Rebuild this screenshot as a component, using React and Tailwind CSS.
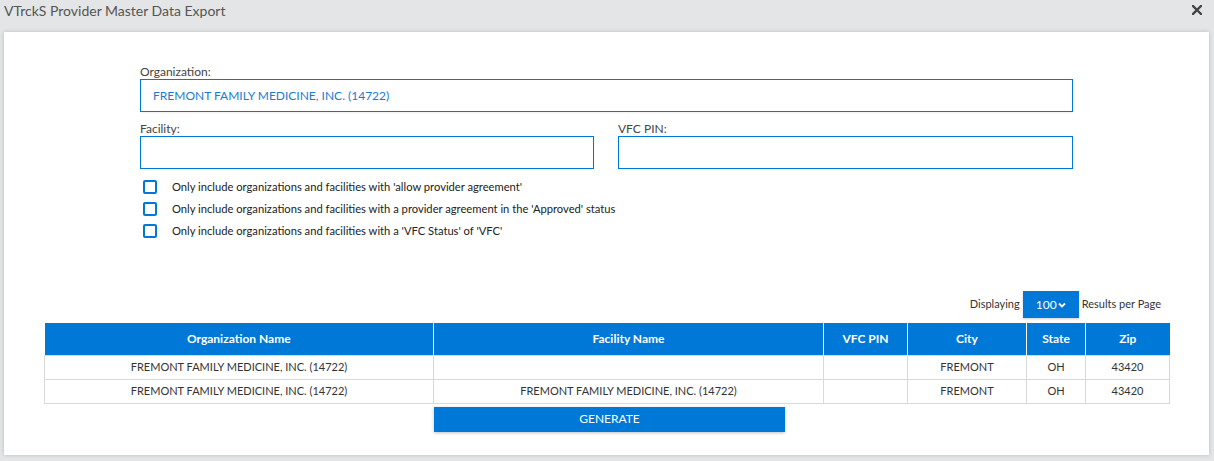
import React from 'react';

const columns = [
  { key: 'org', label: 'Organization Name', width: 389 },
  { key: 'facility', label: 'Facility Name', width: 390 },
  { key: 'pin', label: 'VFC PIN', width: 84 },
  { key: 'city', label: 'City', width: 119 },
  { key: 'state', label: 'State', width: 59 },
  { key: 'zip', label: 'Zip', width: 84 },
];

const rows = [
  { org: 'FREMONT FAMILY MEDICINE, INC. (14722)', facility: '', pin: '', city: 'FREMONT', state: 'OH', zip: '43420' },
  {
    org: 'FREMONT FAMILY MEDICINE, INC. (14722)',
    facility: 'FREMONT FAMILY MEDICINE, INC. (14722)',
    pin: '',
    city: 'FREMONT',
    state: 'OH',
    zip: '43420',
  },
];

const filters = [
  "Only include organizations and facilities with 'allow provider agreement'",
  "Only include organizations and facilities with a provider agreement in the 'Approved' status",
  "Only include organizations and facilities with a 'VFC Status' of 'VFC'",
];

function Field({ label, value, className }) {
  return (
    <div className={className}>
      <div className="h-[15px] text-[12px] leading-[15px] text-[#444]">{label}</div>
      <div className="flex h-[33px] items-center border border-[#0078d7] bg-white pl-[12px] text-[12px] text-[#1a7bd3] shadow-[0_1px_2px_rgba(0,0,0,0.06)]">
        {value}
      </div>
    </div>
  );
}

export default function App() {
  return (
    <div className="h-[461px] w-full overflow-hidden bg-[#e4e5e6] font-['Lato',sans-serif] text-[#333]">
      <div className="flex h-[32px] items-start justify-between pl-[4px] pr-[12px] pt-[1px]">
        <span className="text-[14px] leading-[20px] text-[#555]">VTrckS Provider Master Data Export</span>
        <svg width="10" height="10" viewBox="0 0 10 10" className="mt-[4px]">
          <path d="M1 1L9 9M9 1L1 9" stroke="#444" strokeWidth="2.4" strokeLinecap="square" />
        </svg>
      </div>

      <div className="ml-[4px] mr-[5px] h-[423px] bg-white shadow-[0_0_4px_rgba(0,0,0,0.18)]">
        <div className="ml-[136px] w-[933px] pt-[32px]">
          <Field label="Organization:" value="FREMONT FAMILY MEDICINE, INC. (14722)" />
          <div className="mt-[9px] flex gap-[24px]">
            <Field label="Facility:" value="" className="w-[454px]" />
            <Field label="VFC PIN:" value="" className="w-[455px]" />
          </div>
          <div className="mt-[11px] flex flex-col gap-[8px] pl-[3px]">
            {filters.map((text) => (
              <label key={text} className="flex h-[14px] items-center gap-[15px] text-[11.2px] text-[#222]">
                <span className="h-[14px] w-[14px] rounded-[2px] border-2 border-[#0078d7] bg-white" />
                <span>{text}</span>
              </label>
            ))}
          </div>
        </div>

        <div className="mx-[40px] mt-[53px]">
          <div className="flex items-center justify-end pr-[8px] text-[11px] text-[#333]">
            <span>Displaying</span>
            <button className="ml-[3px] mr-[3px] flex h-[27px] w-[56px] items-center justify-center bg-[#0078d7] text-[12px] text-white shadow-[0_1px_2px_rgba(0,0,0,0.2)]">
              100
              <svg width="8" height="6" viewBox="0 0 8 6" className="ml-[1px] mt-[1px]">
                <path d="M1 1.5L4 4.5L7 1.5" stroke="white" strokeWidth="1.8" fill="none" />
              </svg>
            </button>
            <span>Results per Page</span>
          </div>

          <table className="mt-[5px] w-[1125px] table-fixed border-collapse text-center">
            <colgroup>
              {columns.map((c) => (
                <col key={c.key} style={{ width: c.width }} />
              ))}
            </colgroup>
            <thead>
              <tr className="h-[32px] bg-[#0078d7]">
                {columns.map((c) => (
                  <th key={c.key} className="border-x border-white text-[12px] font-bold text-white first:border-l-0 last:border-r-0">
                    {c.label}
                  </th>
                ))}
              </tr>
            </thead>
            <tbody>
              {rows.map((r, i) => (
                <tr key={i} className="h-[24px]">
                  {columns.map((c) => (
                    <td key={c.key} className="border border-[#d9d9d9] p-0 text-[11px] text-[#333]">
                      {r[c.key]}
                    </td>
                  ))}
                </tr>
              ))}
            </tbody>
          </table>

          <button className="ml-[390px] mt-[3px] h-[25px] w-[351px] bg-[#0078d7] text-[12px] text-white shadow-[0_1px_3px_rgba(0,0,0,0.25)]">
            GENERATE
          </button>
        </div>
      </div>
    </div>
  );
}
